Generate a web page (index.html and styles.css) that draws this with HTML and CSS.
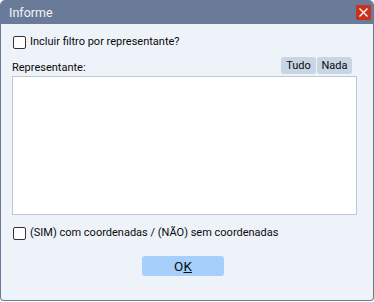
FILE: index.html
```html
<!DOCTYPE html>
<html lang="pt">
	<head>
		<meta charset="UTF-8" />
		<title>Informe</title>
		<link rel="stylesheet" href="styles.css">
	</head>
	<body>
		<div class="window">
			<header class="titlebar">
				<span class="title">Informe</span>
				<button class="close" aria-label="Fechar">
					<svg width="9" height="9" viewBox="0 0 9 9">
						<path d="M0.5 0.5 L8.5 8.5 M8.5 0.5 L0.5 8.5" stroke="#fff" stroke-width="1.3" />
					</svg>
				</button>
			</header>

			<main class="content">
				<label class="check">
					<span class="box"></span>
					Incluir filtro por representante?
				</label>

				<div class="list-head">
					<span>Representante:</span>
					<div class="list-buttons">
						<button class="small-btn">Tudo</button>
						<button class="small-btn">Nada</button>
					</div>
				</div>
				<div class="listbox"></div>

				<label class="check check-coords">
					<span class="box"></span>
					(SIM) com coordenadas / (NÃO) sem coordenadas
				</label>

				<div class="actions">
					<button class="ok-btn">O<u>K</u></button>
				</div>
			</main>
		</div>
	</body>
</html>
```

FILE: styles.css
```css
:root {
	--frame-color: #6a7a99; /* рамка и заголовок окна */
	--body-bg: #eef3fa;
	--text-color: #0a0a0a;
	--close-red: #c8321f;
	--btn-bg: #c8d5e4;
	--ok-bg: #a6d0fb;
	--list-border: #bcc8d6;
	--font-family: 'Roboto', 'Noto Sans', sans-serif;
}

body {
	margin: 0;
	padding: 0;
	background-color: #ffffff;
	font-family: var(--font-family);
	font-size: 11px;
	color: var(--text-color);
}

.window {
	width: 374px;
	height: 301px;
	box-sizing: border-box;
	background-color: var(--body-bg);
	border: 1px solid var(--frame-color);
	border-top: none;
	border-radius: 5px 5px 4px 4px;
	display: flex;
	flex-direction: column;
	overflow: hidden;
}

.titlebar {
	height: 24px;
	flex: 0 0 24px;
	margin: 0 -1px;
	background-color: var(--frame-color);
	display: flex;
	align-items: center;
	justify-content: space-between;
	padding: 0 3px 0 9px;
	border-radius: 5px 5px 0 0;
}

.title {
	color: #f2f4f8;
	font-size: 12.5px;
}

.close {
	width: 15px;
	height: 15px;
	padding: 0;
	border: none;
	border-radius: 1px;
	background-color: var(--close-red);
	display: flex;
	align-items: center;
	justify-content: center;
	margin-top: 1px;
}

.content {
	flex-grow: 1;
	padding: 11px 15px 0 11px;
	display: flex;
	flex-direction: column;
}

.check {
	display: flex;
	align-items: center;
	gap: 4px;
	height: 14px;
	line-height: 14px;
}

.box {
	width: 11px;
	height: 11px;
	border: 1px solid #333333;
	border-radius: 2px;
	background-color: #ffffff;
	margin-left: 1px;
}

.list-head {
	margin-top: 7px;
	display: flex;
	justify-content: space-between;
	align-items: flex-end;
	height: 20px;
}

.list-head span {
	line-height: 14px;
	padding-bottom: 1px;
}

.list-buttons {
	display: flex;
	gap: 1px;
	margin-right: 6px;
	margin-bottom: 2px;
}

.small-btn {
	width: 35px;
	height: 17px;
	padding: 0;
	border: none;
	border-radius: 3px;
	background-color: var(--btn-bg);
	font-family: var(--font-family);
	font-size: 11px;
	color: var(--text-color);
}

.listbox {
	height: 139px;
	box-sizing: border-box;
	background-color: #ffffff;
	border: 1px solid var(--list-border);
	margin-right: 1px;
}

.check-coords {
	margin-top: 11px;
}

.actions {
	display: flex;
	justify-content: center;
	margin-top: 16px;
	padding-right: 4px;
}

.ok-btn {
	width: 82px;
	height: 20px;
	padding: 0;
	border: none;
	border-radius: 3px;
	background-color: var(--ok-bg);
	font-family: var(--font-family);
	font-size: 13.5px;
	color: var(--text-color);
}
```
